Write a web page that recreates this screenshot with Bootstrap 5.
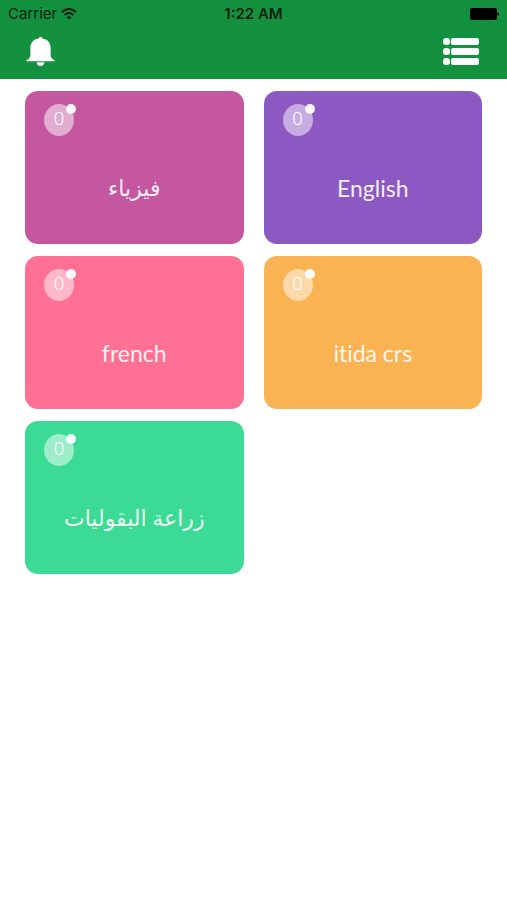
<!DOCTYPE html>
<html lang="en">
<head>
<meta charset="utf-8">
<meta name="viewport" content="width=device-width, initial-scale=1">
<title>Courses</title>
<link href="https://cdn.jsdelivr.net/npm/bootstrap@5.3.0/dist/css/bootstrap.min.css" rel="stylesheet">
<style>
  body { font-family: Inter, "Liberation Sans", sans-serif; }
  .top-area { background: #14913f; height: 79px; }
  .status-bar { height: 28px; padding: 0 8px; font-size: 15px; line-height: 28px; color: #041f0d; }
  .status-bar .clock { font-weight: 600; }
  .tool-row { padding: 8px 28px 0 26px; }
  .icon-btn { line-height: 0; }
  .course-grid { display: grid; grid-template-columns: 1fr 1fr; column-gap: 20px; row-gap: 12px; padding: 12px 25px; }
  .course { height: 153px; border-radius: 13px; padding: 13px 19px; color: #fff; font-family: Lato, "DejaVu Sans", sans-serif; }
  .course:hover { color: #fff; }
  .counter { width: 30px; height: 32px; border-radius: 50%; background: rgba(255,255,255,.5); font-size: 19px; line-height: 30px; font-family: Roboto, sans-serif; font-weight: 300; }
  .counter-dot { width: 10px; height: 10px; top: 0; right: -2px; background: rgba(255,255,255,.95); }
  .course-name { font-size: 23px; line-height: 32px; margin-top: 36px; opacity: .9; font-variant-ligatures: no-common-ligatures; }
  .course-name[lang="ar"] { font-size: 22px; font-variant-ligatures: normal; }
  .magenta { background: #c556a0; }
  .purple { background: #8c58c2; }
  .pink { background: #ff7094; }
  .orange { background: #f9b352; }
  .mint { background: #3bda95; }
</style>
</head>
<body class="bg-white">
<header class="top-area">
  <div class="status-bar d-flex justify-content-between">
    <div class="col d-flex align-items-center gap-1">
      <span>Carrier</span>
      <svg width="16" height="12" viewBox="0 0 16 12" fill="none" stroke="#041f0d" stroke-width="2" aria-hidden="true"><path d="M1 4.2C5-.1 11-.1 15 4.2M3.6 7.1c2.6-2.7 6.2-2.7 8.8 0"/><path d="M8 11.5 5.6 9.2q2.4-1.9 4.8 0Z" fill="#041f0d" stroke="none"/></svg>
    </div>
    <span class="clock">1:22 AM</span>
    <div class="col d-flex align-items-center justify-content-end">
      <svg width="29" height="12" viewBox="0 0 29 12" aria-hidden="true"><rect width="27" height="12" rx="2"/><path d="M27.5 4q1.5.5 1.5 2t-1.5 2Z"/></svg>
    </div>
  </div>
  <nav class="tool-row d-flex justify-content-between align-items-center">
    <button type="button" class="btn icon-btn p-0 border-0" aria-label="Notifications">
      <svg width="29" height="31" viewBox="0 0 29 31" fill="#fff"><path d="M14.5.8a2 2 0 0 1 1.8 1.7C22 3.300 24.600 7 24.600 12v6.200c0 3 1.200 4.800 4 6v1H.4v-1c2.800-1.200 4-3 4-6V12c0-5 2.600-8.700 8.300-9.500A2 2 0 0 1 14.500.8Z"/><path d="M10.500 26.200h8c-.2 2.400-1.800 3.800-4 3.800s-3.800-1.400-4-3.800Z"/></svg>
    </button>
    <button type="button" class="btn icon-btn p-0 border-0" aria-label="Menu">
      <svg width="36" height="29" viewBox="0 0 36 29" fill="#fff"><rect x="0" y="1" width="7" height="7" rx="3"/><rect x="8" y="1" width="28" height="7" rx="2"/><rect x="0" y="11" width="7" height="7" rx="3"/><rect x="8" y="11" width="28" height="7" rx="2"/><rect x="0" y="21" width="7" height="7" rx="3"/><rect x="8" y="21" width="28" height="7" rx="2"/></svg>
    </button>
  </nav>
</header>
<main class="course-grid">
  <a href="#" class="course magenta d-block text-decoration-none">
    <div class="counter position-relative text-center">0<span class="counter-dot position-absolute rounded-circle"></span></div>
    <div class="course-name text-center" lang="ar" dir="rtl">فيزياء</div>
  </a>
  <a href="#" class="course purple d-block text-decoration-none">
    <div class="counter position-relative text-center">0<span class="counter-dot position-absolute rounded-circle"></span></div>
    <div class="course-name text-center">English</div>
  </a>
  <a href="#" class="course pink d-block text-decoration-none">
    <div class="counter position-relative text-center">0<span class="counter-dot position-absolute rounded-circle"></span></div>
    <div class="course-name text-center">french</div>
  </a>
  <a href="#" class="course orange d-block text-decoration-none">
    <div class="counter position-relative text-center">0<span class="counter-dot position-absolute rounded-circle"></span></div>
    <div class="course-name text-center">itida crs</div>
  </a>
  <a href="#" class="course mint d-block text-decoration-none">
    <div class="counter position-relative text-center">0<span class="counter-dot position-absolute rounded-circle"></span></div>
    <div class="course-name text-center" lang="ar" dir="rtl">زراعة البقوليات</div>
  </a>
</main>
<script src="https://cdn.jsdelivr.net/npm/bootstrap@5.3.0/dist/js/bootstrap.bundle.min.js"></script>
</body>
</html>
